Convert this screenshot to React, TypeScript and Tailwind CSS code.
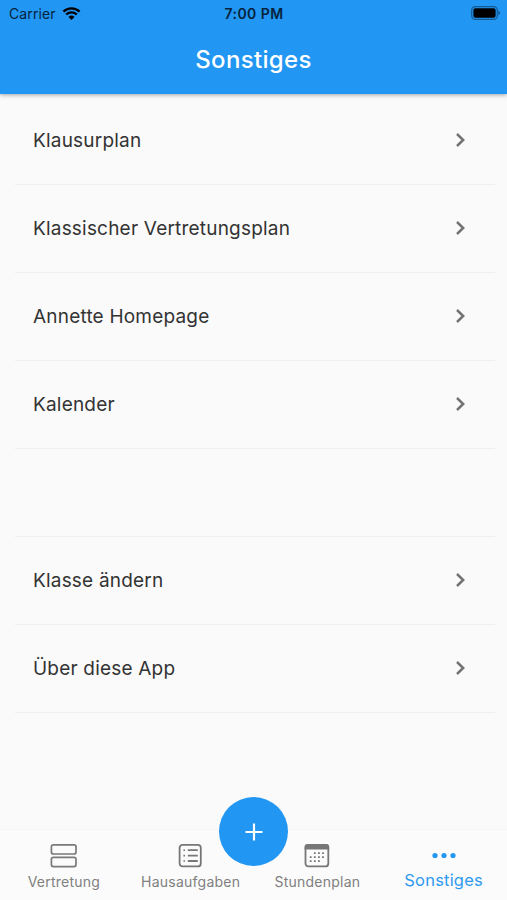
import { useState } from 'react'
import type { ReactNode } from 'react'

const mainEntries = ['Klausurplan', 'Klassischer Vertretungsplan', 'Annette Homepage', 'Kalender']
const appEntries = ['Klasse ändern', 'Über diese App']

function StatusBar() {
  return (
    <div className="grid h-7 grid-cols-3 items-center pl-[9px] pr-[6px] text-[#06233b]">
      <div className="flex items-center gap-[6px]">
        <span className="text-[14px] leading-7 tracking-[0.1px]">Carrier</span>
        <svg width="19" height="15" viewBox="0 0 20 16" className="-mt-[2px] text-black">
          <g fill="none" stroke="currentColor" strokeWidth="2.5">
            <path d="M1.4 6A12.2 12.2 0 0 1 18.6 6" />
            <path d="M4.4 9.1A8 8 0 0 1 15.6 9.1" />
          </g>
          <path d="M6.8 11.6A4.6 4.6 0 0 1 13.2 11.6L10 14.8Z" fill="currentColor" />
        </svg>
      </div>
      <span className="-ml-[2px] text-center text-[14px] font-semibold leading-7 tracking-[0.45px]">7:00 PM</span>
      <svg width="30" height="14" viewBox="0 0 30 14" className="-mt-[2px] justify-self-end">
        <rect x="0.7" y="0.6" width="25.6" height="12.8" rx="3.6" fill="none" stroke="#145a93" strokeWidth="1.2" />
        <rect x="2.4" y="2.3" width="22.2" height="9.4" rx="2" fill="#000" />
        <path d="M27.4 4.8C29.6 5.6 29.6 8.4 27.4 9.2Z" fill="#145a93" />
      </svg>
    </div>
  )
}

function ListRow({ label }: { label: string }) {
  return (
    <li className="h-[88px] border-b border-[#efefef]">
      <button type="button" className="flex h-full w-full items-center justify-between pl-[18px] pr-[29px] text-left">
        <span className="pt-[2px] text-[19px] tracking-[0.2px] text-[#333]">{label}</span>
        <svg width="11" height="16" viewBox="0 0 11 16" className="mb-[2px]">
          <path d="M2 2L8.2 8L2 14" fill="none" stroke="#727272" strokeWidth="2.5" />
        </svg>
      </button>
    </li>
  )
}

function RowsIcon() {
  return (
    <svg width="28" height="26" viewBox="0 0 28 26" fill="none" stroke="#7a7a7a" strokeWidth="1.7">
      <rect x="2.4" y="1.8" width="24.6" height="9.2" rx="2" />
      <rect x="2.4" y="14.4" width="24.6" height="9.2" rx="2" />
    </svg>
  )
}

function ListIcon() {
  return (
    <svg width="26" height="26" viewBox="0 0 26 26" fill="none" stroke="#777">
      <rect x="2.6" y="1.8" width="21.2" height="21.6" rx="3" strokeWidth="1.8" />
      <path d="M10.8 7.2H20.8M10.8 12.6H20.8M10.8 18H20.8" strokeWidth="1.8" />
      <path d="M6.4 7.2H8M6.4 12.6H8M6.4 18H8" strokeWidth="1.6" />
    </svg>
  )
}

function CalendarIcon() {
  return (
    <svg width="26" height="26" viewBox="0 0 26 26">
      <rect x="1.5" y="1.8" width="22.8" height="21.6" rx="3" fill="none" stroke="#777" strokeWidth="1.8" />
      <path d="M0.6 6.6V4A3 3 0 0 1 3.6 0.9H22.2A3 3 0 0 1 25.2 4V6.6Z" fill="#777" />
      <g stroke="#777" strokeWidth="1.8" strokeDasharray="1.8 2.3">
        <path d="M9.9 10.2H20.4" />
        <path d="M5.8 14.2H20.4" />
        <path d="M5.8 18.2H16.2" />
      </g>
    </svg>
  )
}

function DotsIcon() {
  return (
    <svg width="26" height="26" viewBox="0 0 26 26" fill="#2196f3">
      <circle cx="4" cy="12.5" r="2.6" />
      <circle cx="13" cy="12.5" r="2.6" />
      <circle cx="22" cy="12.5" r="2.6" />
    </svg>
  )
}

const tabs: { label: string; icon: ReactNode }[] = [
  { label: 'Vertretung', icon: <RowsIcon /> },
  { label: 'Hausaufgaben', icon: <ListIcon /> },
  { label: 'Stundenplan', icon: <CalendarIcon /> },
  { label: 'Sonstiges', icon: <DotsIcon /> },
]

export default function App() {
  const [active, setActive] = useState('Sonstiges')

  return (
    <div className="flex h-[900px] w-full flex-col bg-[#fafafa] font-['Inter',sans-serif]">
      {/* App bar */}
      <header className="h-[94px] shrink-0 bg-[#2196f3] shadow-[0_1px_4px_rgba(0,0,0,0.35)]">
        <StatusBar />
        <h1 className="pt-[14px] text-center text-[24px] font-medium leading-9 tracking-[0.35px] text-white">
          Sonstiges
        </h1>
      </header>

      {/* Entries */}
      <main className="flex-1 pl-[15px] pr-[12px] pt-[3px]">
        <ul>
          {mainEntries.map((label) => (
            <ListRow key={label} label={label} />
          ))}
          <li className="h-[88px] border-b border-[#efefef]" />
          {appEntries.map((label) => (
            <ListRow key={label} label={label} />
          ))}
        </ul>
      </main>

      {/* Bottom navigation */}
      <nav className="relative h-[71px] shrink-0 border-t border-[#f5f5f5] bg-[#fbfbfb]">
        <div className="grid grid-cols-4">
          {tabs.map(({ label, icon }) => (
            <button
              key={label}
              type="button"
              onClick={() => setActive(label)}
              className="flex flex-col items-center pt-[13px]"
            >
              {icon}
              <span
                className={
                  active === label
                    ? '-mt-px text-[16.5px] leading-6 tracking-[0.2px] text-[#2f9af0]'
                    : 'pl-px pt-px text-[14px] leading-6 tracking-[0.24px] text-[#808080]'
                }
              >
                {label}
              </span>
            </button>
          ))}
        </div>
        <button
          type="button"
          aria-label="Hinzufügen"
          className="absolute left-[219px] top-[-33px] flex size-[69px] items-center justify-center rounded-full bg-[#2196f3]"
        >
          <svg width="18" height="18" viewBox="0 0 18 18">
            <path d="M9 0.5V17.5M0.5 9H17.5" stroke="#fff" strokeWidth="2.2" />
          </svg>
        </button>
      </nav>
    </div>
  )
}
